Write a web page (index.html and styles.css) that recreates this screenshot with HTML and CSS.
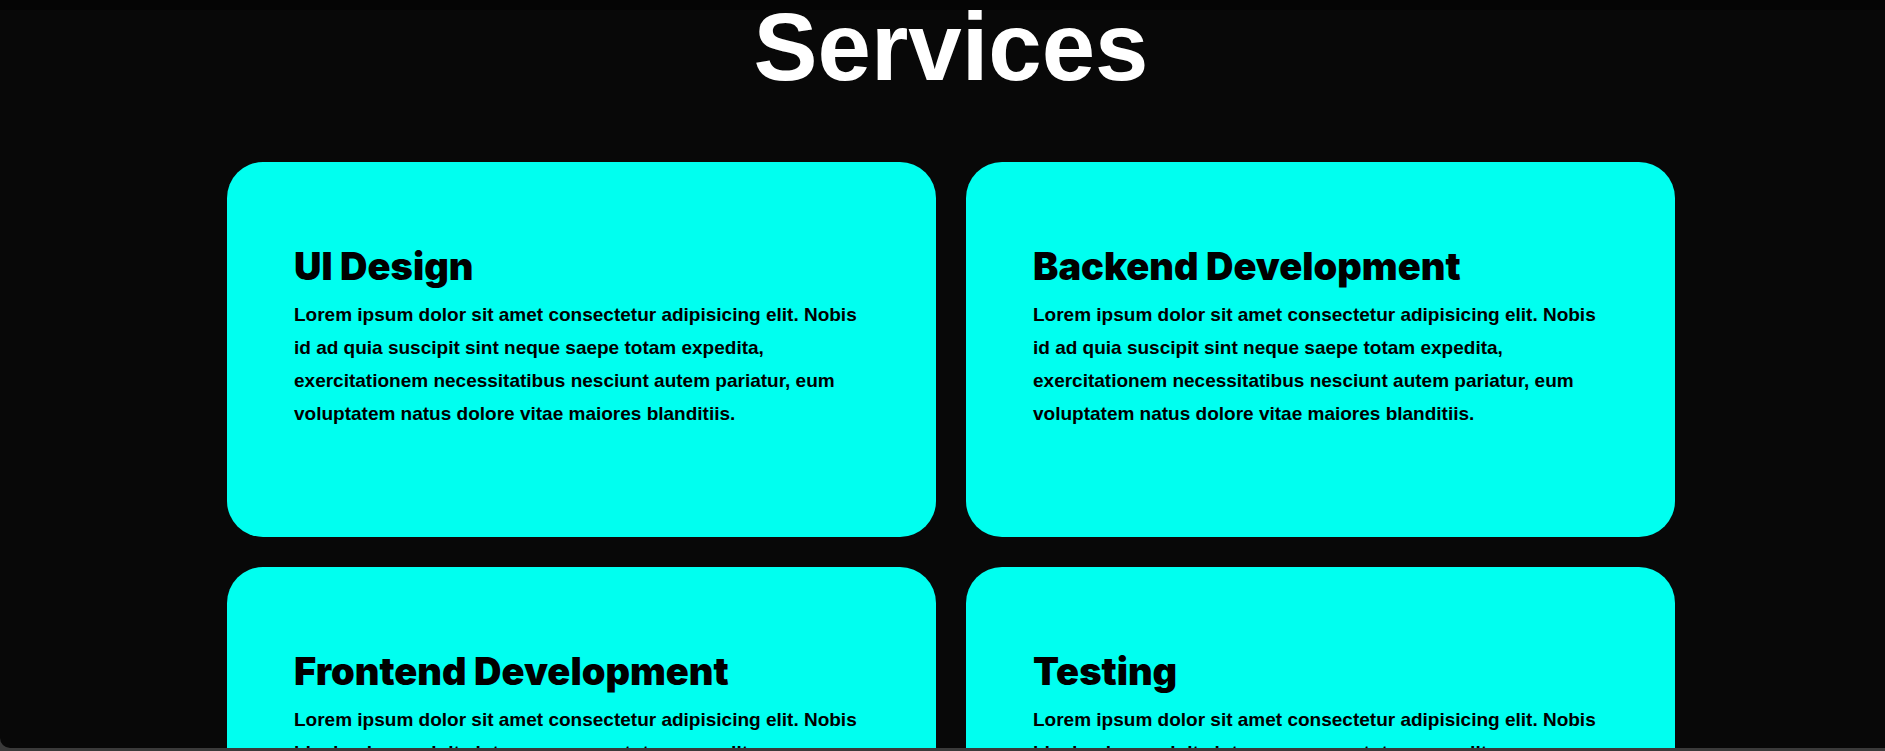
FILE: index.html
```html
<!DOCTYPE html>
<html lang="en">
<head>
<meta charset="utf-8">
<title>Services</title>
<link rel="stylesheet" href="styles.css">
</head>
<body>
<main class="page">
  <section class="services">
    <h1 class="services-title">Services</h1>
    <div class="services-grid">
      <article class="card">
        <h2 class="card-title">UI Design</h2>
        <p class="card-text">Lorem ipsum dolor sit amet consectetur adipisicing elit. Nobis id ad quia suscipit sint neque saepe totam expedita, exercitationem necessitatibus nesciunt autem pariatur, eum voluptatem natus dolore vitae maiores blanditiis.</p>
      </article>
      <article class="card">
        <h2 class="card-title">Backend Development</h2>
        <p class="card-text">Lorem ipsum dolor sit amet consectetur adipisicing elit. Nobis id ad quia suscipit sint neque saepe totam expedita, exercitationem necessitatibus nesciunt autem pariatur, eum voluptatem natus dolore vitae maiores blanditiis.</p>
      </article>
      <article class="card">
        <h2 class="card-title">Frontend Development</h2>
        <p class="card-text">Lorem ipsum dolor sit amet consectetur adipisicing elit. Nobis id ad quia suscipit sint neque saepe totam expedita, exercitationem necessitatibus nesciunt autem pariatur, eum voluptatem natus dolore vitae maiores blanditiis.</p>
      </article>
      <article class="card">
        <h2 class="card-title">Testing</h2>
        <p class="card-text">Lorem ipsum dolor sit amet consectetur adipisicing elit. Nobis id ad quia suscipit sint neque saepe totam expedita, exercitationem necessitatibus nesciunt autem pariatur, eum voluptatem natus dolore vitae maiores blanditiis.</p>
      </article>
    </div>
  </section>
</main>
</body>
</html>
```
FILE: styles.css
```css
* {
  box-sizing: border-box;
  margin: 0;
  padding: 0;
}

body {
  display: flex;
  flex-direction: column;
  height: 100vh;
  padding-bottom: 3px;
  overflow: hidden;
  background: #3a3a3a;
  font-family: "Liberation Sans", Arial, sans-serif;
}

.page {
  flex: 1;
  min-height: 0;
  overflow: hidden;
  border-bottom-left-radius: 10px;
  background: linear-gradient(#050505 10px, #080808 10px);
}

.services {
  padding: 3px 210px 0 227px;
}

.services-title {
  margin-bottom: 71px;
  color: #fff;
  font-size: 96px;
  font-weight: 700;
  line-height: 88px;
  text-align: center;
}

.services-grid {
  display: grid;
  grid-template-columns: 1fr 1fr;
  gap: 30px;
}

.card {
  min-height: 375px;
  padding: 80px 67px;
  border-radius: 36px;
  background: #00fff0;
  color: #000;
}

.card-title {
  margin-bottom: 8px;
  font-family: "Arial Black", Inter, sans-serif;
  font-size: 38px;
  font-weight: 900;
  line-height: 48px;
}

.card-text {
  font-size: 19px;
  font-weight: 700;
  line-height: 33px;
}
```
